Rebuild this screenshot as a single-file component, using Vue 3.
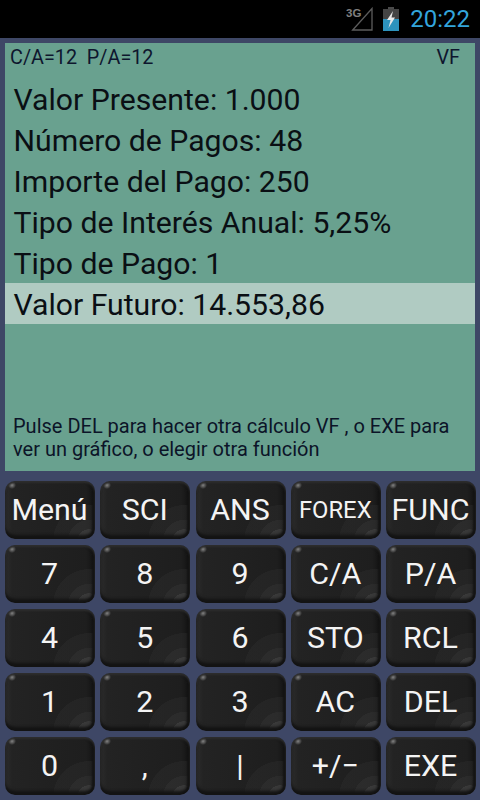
<script setup>
const lines = [
  'Valor Presente: 1.000',
  'Número de Pagos: 48',
  'Importe del Pago: 250',
  'Tipo de Interés Anual: 5,25%',
  'Tipo de Pago: 1',
  'Valor Futuro: 14.553,86',
]
const keys = [
  'Menú', 'SCI', 'ANS', 'FOREX', 'FUNC',
  '7', '8', '9', 'C/A', 'P/A',
  '4', '5', '6', 'STO', 'RCL',
  '1', '2', '3', 'AC', 'DEL',
  '0', ',', '|', '+/−', 'EXE',
]
</script>

<template>
  <div class="phone">
    <header class="status">
      <svg class="signal" width="27" height="24" viewBox="0 0 27 24">
        <path d="M6.7 23 L26 1.5 V23 Z" fill="none" stroke="#5c5c5c" stroke-width="1.3" />
        <text x="0" y="10" class="net">3G</text>
      </svg>
      <svg class="battery" width="16" height="24" viewBox="0 0 16 24">
        <rect x="5" y="0" width="6" height="2" fill="#4a4a4a" />
        <rect x="0" y="2" width="16" height="10" fill="#444" />
        <rect x="0" y="12" width="16" height="12" fill="#2d93bd" />
        <path d="M10 4 L4 13 H7.5 L5.5 21 L12 10.5 H8.5 Z" fill="#e8e8e8" />
      </svg>
      <span class="clock">20:22</span>
    </header>

    <section class="screen">
      <div class="top">
        <span>C/A=12&nbsp;&nbsp;P/A=12</span>
        <span class="mode">VF</span>
      </div>
      <div class="list">
        <div v-for="(l, i) in lines" :key="l" class="line" :class="{ active: i === 5 }">{{ l }}</div>
      </div>
      <p class="hint">Pulse DEL para hacer otra cálculo VF , o EXE para ver un gráfico, o elegir otra función</p>
    </section>

    <section class="pad">
      <button v-for="k in keys" :key="k" class="key" :class="{ small: k === 'FOREX' }">{{ k }}</button>
    </section>
  </div>
</template>

<style>
html, body { margin: 0; background: #3e4766; }
</style>

<style scoped>
.phone {
  width: 480px;
  height: 800px;
  overflow: hidden;
  background: #3e4766;
  font-family: Roboto, "Liberation Sans", sans-serif;
  display: flex;
  flex-direction: column;
}
.status {
  height: 38px;
  background: #000;
  display: flex;
  align-items: center;
  justify-content: flex-end;
  padding-right: 10px;
  box-sizing: border-box;
}
.signal { margin-right: 10px; }
.net { font: bold 11.5px "Liberation Sans", sans-serif; fill: #808080; }
.battery { margin-right: 11px; }
.clock { color: #33a5dc; font-size: 24px; line-height: 38px; }
.screen {
  margin: 5px 5px 0;
  height: 428px;
  background: #69a18f;
  color: #0a0f14;
  display: flex;
  flex-direction: column;
  box-sizing: border-box;
}
.top {
  display: flex;
  justify-content: space-between;
  font-size: 19.8px;
  line-height: 30px;
  padding: 0 15px 0 5px;
  height: 35px;
  color: #0e162e;
}
.list { display: flex; flex-direction: column; }
.line {
  height: 41px;
  line-height: 43px;
  font-size: 30.2px;
  padding-left: 8.5px;
  white-space: nowrap;
}
.line.active { background: #b0cbc2; }
.hint {
  margin: auto 0 0;
  padding: 0 8px 10px;
  font-size: 20px;
  line-height: 23px;
  color: #0c1428;
}
.pad {
  flex: 1;
  display: grid;
  grid-template-columns: repeat(5, 90px);
  grid-auto-rows: 58px;
  column-gap: 5.25px;
  row-gap: 6px;
  padding: 10px 5px 0;
}
.key {
  border: 0;
  padding: 0 1px 0 0;
  margin: 0;
  width: 90px;
  height: 58px;
  border-radius: 10px;
  color: #f4f4f4;
  font-family: inherit;
  font-size: 30.4px;
  line-height: 58px;
  text-align: center;
  background:
    radial-gradient(circle 4px at 7px 4px, #8a8a8a 0, rgba(138,138,138,0) 100%),
    radial-gradient(circle 36px at 84px 60px, rgba(75,75,75,.6) 0 32%, rgba(56,56,56,.5) 33% 58%, rgba(44,44,44,.45) 59% 99%, rgba(0,0,0,0) 100%),
    linear-gradient(to right, #2c2c2c 0, #232323 8%, #1e1e1e 90%, #131313 100%);
  box-shadow:
    inset 0 2px 2px #2e2e2e,
    inset 0 -4px 3px #131313,
    inset -3px 0 2px #151515;
}
.key.small { font-size: 23.8px; }
</style>
